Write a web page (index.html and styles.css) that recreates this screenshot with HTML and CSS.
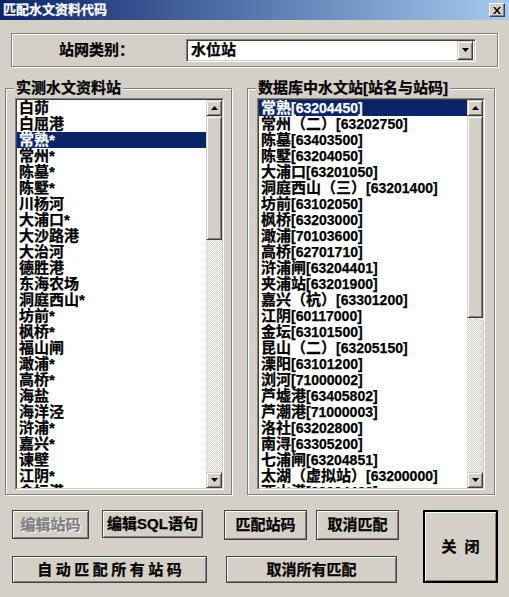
FILE: index.html
```html
<!DOCTYPE html>
<html lang="zh-CN">
<head>
    <meta charset="UTF-8">
    <meta name="viewport" content="width=device-width, initial-scale=1.0">
    <title>匹配水文资料代码</title>
    <link rel="stylesheet" href="styles.css">
</head>
<body>
    <div class="window">
        <!-- 标题栏 -->
        <div class="titlebar">
            <span class="title">匹配水文资料代码</span>
            <span class="close-btn">
                <svg width="8" height="7" viewBox="0 0 8 7"><path d="M0 0h2l2 2.5L6 0h2L5 3.5 8 7H6L4 4.5 2 7H0l3-3.5z" fill="#000"/></svg>
            </span>
        </div>

        <!-- 站网类别 -->
        <div class="group category">
            <span class="category-label">站网类别：</span>
            <div class="combo">
                <span class="combo-text">水位站</span>
                <span class="combo-btn">
                    <svg width="7" height="4" viewBox="0 0 7 4"><polygon points="0,0 7,0 3.5,4" fill="#000"/></svg>
                </span>
            </div>
        </div>

        <!-- 两个列表 -->
        <div class="lists">
            <div class="group list-group left-group">
                <span class="legend">实测水文资料站</span>
                <div class="listbox">
                    <div class="listbox-inner">
                        <ul class="items">
                            <li>白茆</li>
                            <li>白屈港</li>
                            <li class="selected">常熟*</li>
                            <li>常州*</li>
                            <li>陈墓*</li>
                            <li>陈墅*</li>
                            <li>川杨河</li>
                            <li>大浦口*</li>
                            <li>大沙路港</li>
                            <li>大治河</li>
                            <li>德胜港</li>
                            <li>东海农场</li>
                            <li>洞庭西山*</li>
                            <li>坊前*</li>
                            <li>枫桥*</li>
                            <li>福山闸</li>
                            <li>澉浦*</li>
                            <li>高桥*</li>
                            <li>海盐</li>
                            <li>海洋泾</li>
                            <li>浒浦*</li>
                            <li>嘉兴*</li>
                            <li>谏壁</li>
                            <li>江阴*</li>
                            <li>金坛港</li>
                        </ul>
                        <div class="scrollbar">
                            <span class="sb-btn">
                                <svg width="7" height="4" viewBox="0 0 7 4"><polygon points="3.5,0 7,4 0,4" fill="#000"/></svg>
                            </span>
                            <div class="sb-track">
                                <span class="sb-thumb thumb-left"></span>
                            </div>
                            <span class="sb-btn">
                                <svg width="7" height="4" viewBox="0 0 7 4"><polygon points="0,0 7,0 3.5,4" fill="#000"/></svg>
                            </span>
                        </div>
                    </div>
                </div>
            </div>

            <div class="group list-group right-group">
                <span class="legend">数据库中水文站[站名与站码]</span>
                <div class="listbox">
                    <div class="listbox-inner">
                        <ul class="items">
                            <li class="selected">常熟<span class="code">[63204450]</span></li>
                            <li>常州（二）<span class="code">[63202750]</span></li>
                            <li>陈墓<span class="code">[63403500]</span></li>
                            <li>陈墅<span class="code">[63204050]</span></li>
                            <li>大浦口<span class="code">[63201050]</span></li>
                            <li>洞庭西山（三）<span class="code">[63201400]</span></li>
                            <li>坊前<span class="code">[63102050]</span></li>
                            <li>枫桥<span class="code">[63203000]</span></li>
                            <li>澉浦<span class="code">[70103600]</span></li>
                            <li>高桥<span class="code">[62701710]</span></li>
                            <li>浒浦闸<span class="code">[63204401]</span></li>
                            <li>夹浦站<span class="code">[63201900]</span></li>
                            <li>嘉兴（杭）<span class="code">[63301200]</span></li>
                            <li>江阴<span class="code">[60117000]</span></li>
                            <li>金坛<span class="code">[63101500]</span></li>
                            <li>昆山（二）<span class="code">[63205150]</span></li>
                            <li>溧阳<span class="code">[63101200]</span></li>
                            <li>浏河<span class="code">[71000002]</span></li>
                            <li>芦墟港<span class="code">[63405802]</span></li>
                            <li>芦潮港<span class="code">[71000003]</span></li>
                            <li>洛社<span class="code">[63202800]</span></li>
                            <li>南浔<span class="code">[63305200]</span></li>
                            <li>七浦闸<span class="code">[63204851]</span></li>
                            <li>太湖（虚拟站）<span class="code">[63200000]</span></li>
                            <li>西山港<span class="code">[63204400]</span></li>
                        </ul>
                        <div class="scrollbar">
                            <span class="sb-btn">
                                <svg width="7" height="4" viewBox="0 0 7 4"><polygon points="3.5,0 7,4 0,4" fill="#000"/></svg>
                            </span>
                            <div class="sb-track">
                                <span class="sb-thumb thumb-right"></span>
                            </div>
                            <span class="sb-btn">
                                <svg width="7" height="4" viewBox="0 0 7 4"><polygon points="0,0 7,0 3.5,4" fill="#000"/></svg>
                            </span>
                        </div>
                    </div>
                </div>
            </div>
        </div>

        <!-- 按钮区 -->
        <div class="buttons">
            <div class="btn-area">
                <div class="btn-row">
                    <span class="btn btn-edit disabled">编辑站码</span>
                    <span class="btn btn-sql">编辑SQL语句</span>
                    <span class="btn btn-match">匹配站码</span>
                    <span class="btn btn-cancel">取消匹配</span>
                </div>
                <div class="btn-row">
                    <span class="btn btn-auto">自动匹配所有站码</span>
                    <span class="btn btn-cancel-all">取消所有匹配</span>
                </div>
            </div>
            <span class="btn btn-close">关 闭</span>
        </div>
    </div>
</body>
</html>
```

FILE: styles.css
```css
*{
    margin: 0;
    padding: 0;
    box-sizing: border-box;
}
li{
    list-style: none;
}
body{
    background: #d4d0c8;
    font-family: "Liberation Sans", "Noto Sans CJK SC", sans-serif;
    font-weight: bold;
    font-size: 15px;
    color: #000;
    /* 原界面是点阵粗体,稍微加粗一点 */
    -webkit-text-stroke: 0.25px;
}
.window{
    width: 509px;
    height: 597px;
    overflow: hidden;
}

/* 标题栏 */
.titlebar{
    height: 20px;
    background: linear-gradient(to right, #0a246a, #a6caf0);
    display: flex;
    align-items: center;
    justify-content: space-between;
    padding: 0 4px 0 3px;
}
.titlebar .title{
    color: #fff;
    font-size: 13px;
    line-height: 20px;
}
.close-btn{
    width: 16px;
    height: 14px;
    display: flex;
    align-items: center;
    justify-content: center;
    background: #d4d0c8;
    border: 1px solid;
    border-color: #fff #404040 #404040 #fff;
    box-shadow: inset -1px -1px #808080;
}

/* 凹凸分组框 */
.group{
    border: 1px solid #808080;
    box-shadow: inset 1px 1px #fff, 1px 1px #fff;
}
.category{
    margin: 13px 0 0 11px;
    width: 487px;
    height: 34px;
    display: flex;
    align-items: center;
    padding-left: 47px;
}
.category-label{
    width: 127px;
    line-height: 16px;
}
.combo{
    width: 290px;
    height: 23px;
    background: #fff;
    border: 1px solid;
    border-color: #808080 #fff #fff #808080;
    box-shadow: inset 1px 1px #404040, inset -1px -1px #d4d0c8;
    display: flex;
    align-items: center;
    justify-content: space-between;
    padding: 2px;
}
.combo-text{
    padding-left: 2px;
    line-height: 16px;
}
.combo-btn{
    width: 16px;
    height: 19px;
    display: flex;
    align-items: center;
    justify-content: center;
    background: #d4d0c8;
    border: 1px solid;
    border-color: #d4d0c8 #404040 #404040 #d4d0c8;
    box-shadow: inset 1px 1px #fff, inset -1px -1px #808080;
}

/* 列表 */
.lists{
    display: flex;
    gap: 15px;
    margin: 21px 0 0 5px;
}
.list-group{
    height: 407px;
    display: flex;
    flex-direction: column;
    align-items: flex-start;
}
.left-group{
    width: 227px;
}
.right-group{
    width: 248px;
}
.legend{
    margin: -9px 0 0 8px;
    padding: 0 2px;
    line-height: 16px;
    background: #d4d0c8;
}
.listbox{
    margin: 2px 0 0 9px;
    height: 392px;
    border: 1px solid;
    border-color: #808080 #fff #fff #808080;
}
.left-group .listbox{
    width: 209px;
}
.right-group .listbox{
    width: 228px;
}
.listbox-inner{
    height: 100%;
    border: 1px solid;
    border-color: #404040 #d4d0c8 #d4d0c8 #404040;
    background: #fff;
    display: flex;
}
.items{
    flex: 1;
    overflow: hidden;
}
.items li{
    height: 16px;
    line-height: 16px;
    padding-left: 2px;
    white-space: nowrap;
}
.items li.selected{
    background: #0a246a;
    color: #fff;
}
.items .code{
    font-size: 14px;
}

/* 滚动条 */
.scrollbar{
    width: 16px;
    display: flex;
    flex-direction: column;
}
.sb-btn,
.sb-thumb{
    display: flex;
    align-items: center;
    justify-content: center;
    background: #d4d0c8;
    border: 1px solid;
    border-color: #d4d0c8 #404040 #404040 #d4d0c8;
    box-shadow: inset 1px 1px #fff, inset -1px -1px #808080;
}
.sb-btn{
    height: 16px;
}
.sb-track{
    flex: 1;
    background-color: #fff;
    background-image: repeating-conic-gradient(#d4d0c8 0 25%, #fff 0 50%);
    background-size: 2px 2px;
}
.thumb-left{
    height: 124px;
}
.thumb-right{
    height: 202px;
}

/* 按钮 */
.buttons{
    display: flex;
    margin: 15px 0 0 12px;
}
.btn-area{
    width: 411px;
    display: flex;
    flex-direction: column;
    gap: 16px;
}
.btn-row{
    display: flex;
    align-items: flex-start;
}
.btn{
    display: flex;
    align-items: center;
    justify-content: center;
    background: #d4d0c8;
    border: 1px solid #404040;
    box-shadow: inset 1px 1px #fff, inset -1px -1px #808080;
    line-height: 16px;
    white-space: nowrap;
}
.btn.disabled{
    color: #808080;
    text-shadow: 1px 1px #fff;
}
.btn-edit{
    width: 77px;
    height: 29px;
}
.btn-sql{
    width: 101px;
    height: 28px;
    margin-left: 13px;
}
.btn-match{
    width: 83px;
    height: 30px;
    margin-left: 21px;
}
.btn-cancel{
    width: 83px;
    height: 30px;
    margin-left: 9px;
}
.btn-auto{
    width: 195px;
    height: 27px;
    letter-spacing: 3.5px;
    text-indent: 3.5px;
}
.btn-cancel-all{
    width: 171px;
    height: 27px;
    margin-left: 19px;
}
.btn-close{
    width: 75px;
    height: 73px;
    border: 2px solid #000;
    word-spacing: 4px;
}
```
